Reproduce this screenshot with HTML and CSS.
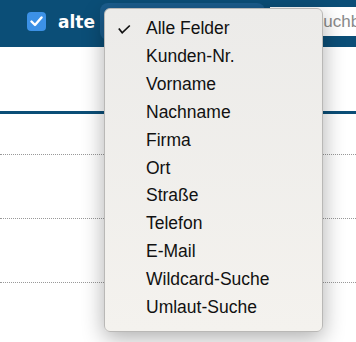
FILE: index.html
```html
<!DOCTYPE html>
<html lang="de">
<head>
  <meta charset="UTF-8" />
  <meta name="viewport" content="width=device-width, initial-scale=1.0" />
  <title>Kundensuche</title>
  <link rel="stylesheet" href="styles.css">
</head>
<body>

  <div class="topbar">
    <span class="check-box">
      <svg width="13" height="11" viewBox="0 0 13 11"><polyline points="1.5,5.5 5,9 11.5,1.5" fill="none" stroke="#fff" stroke-width="2.4" stroke-linecap="round" stroke-linejoin="round"/></svg>
    </span>
    <span class="topbar-label">alte</span>
    <span class="field-select"></span>
    <input class="search-input" type="text" placeholder="Suchbegriff" />
  </div>

  <div class="table-head"></div>
  <div class="row row-first"></div>
  <div class="row"></div>
  <div class="row"></div>
  <div class="row row-last"></div>

  <!-- Dropdown der Feldauswahl -->
  <ul class="menu">
    <li class="menu-item selected">
      <svg class="tick" width="14" height="11" viewBox="0 0 14 11"><polyline points="0.8,4.5 4.2,8.8 11.8,1.5" fill="none" stroke="#111" stroke-width="1.7"/></svg>
      Alle Felder
    </li>
    <li class="menu-item">Kunden-Nr.</li>
    <li class="menu-item">Vorname</li>
    <li class="menu-item">Nachname</li>
    <li class="menu-item">Firma</li>
    <li class="menu-item">Ort</li>
    <li class="menu-item">Straße</li>
    <li class="menu-item">Telefon</li>
    <li class="menu-item">E-Mail</li>
    <li class="menu-item">Wildcard-Suche</li>
    <li class="menu-item">Umlaut-Suche</li>
  </ul>

</body>
</html>
```

FILE: styles.css
```css
body { margin: 0; background: #fff; font-family: "Liberation Sans", Arial, sans-serif; overflow: hidden; }

.topbar { display: flex; align-items: center; height: 43px; padding: 0 0 4px 27px; background: #0b4e77; overflow: hidden; }
.check-box { display: flex; align-items: center; justify-content: center; flex: none; width: 19px; height: 19px; margin-right: 12px; border-radius: 4px; background: #3c91e6; }
.topbar-label { flex: none; width: 42px; overflow: hidden; color: #fff; font-family: "DejaVu Sans", sans-serif; font-weight: bold; font-size: 17px; }
.field-select { flex: none; width: 165px; height: 37px; margin-right: 5px; border-radius: 8px; background: #1b5d8d; }
.search-input { flex: none; width: 120px; height: 29px; box-sizing: border-box; padding: 0 0 0 42px; border: none; background: #fff; font-family: "Liberation Sans", Arial, sans-serif; font-size: 17px; }
.search-input::placeholder { color: #8a8a8a; }

.table-head { height: 64px; border-bottom: 3px solid #0b4e77; }
.row { height: 63px; border-bottom: 1px dotted #999; }
.row-first { height: 40px; }
.row-last { border-bottom: none; }

.menu { position: absolute; left: 104px; top: 8px; width: 217px; margin: 0; padding: 6px 0 9px; list-style: none; border: 1px solid #b9b8b6; border-radius: 6px; background: linear-gradient(#ecebe9, #f4f2ee); box-shadow: 0 6px 22px rgba(0, 0, 0, 0.32); }
.menu-item { position: relative; padding-left: 41px; line-height: 27.9px; font-size: 17.5px; color: #111; }
.tick { position: absolute; left: 12.5px; top: 8.5px; }
```
